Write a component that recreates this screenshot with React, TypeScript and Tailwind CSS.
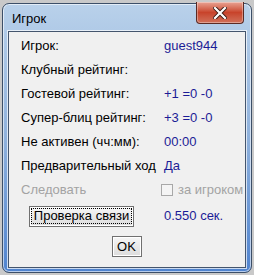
import React from "react";

const rows: { label: string; value?: string }[] = [
  { label: "Игрок:", value: "guest944" },
  { label: "Клубный рейтинг:" },
  { label: "Гостевой рейтинг:", value: "+1 =0 -0" },
  { label: "Супер-блиц рейтинг:", value: "+3 =0 -0" },
  { label: "Не активен (чч:мм):", value: "00:00" },
  { label: "Предварительный ход", value: "Да" },
];

function CloseButton() {
  return (
    <div className="flex h-[22px] w-[48px] items-center justify-center rounded-b-[4px] border border-t-0 border-[#5b2a24] bg-gradient-to-b from-[#e8a393] via-[#c8432b] to-[#d0705a] shadow-[inset_0_0_0_1px_rgba(255,255,255,0.35)]">
      <svg width="14" height="12" viewBox="0 0 14 12">
        <path d="M2 1 L12 11 M12 1 L2 11" stroke="#3a1a14" strokeWidth="4" strokeLinecap="square" />
        <path d="M2 1 L12 11 M12 1 L2 11" stroke="#ffffff" strokeWidth="2.2" strokeLinecap="square" />
      </svg>
    </div>
  );
}

export default function App() {
  return (
    <div className="h-[275px] w-[254px] bg-[#c9c9c9] pl-[2px] pt-[3px]" style={{ fontFamily: '"Liberation Sans", Arial, sans-serif' }}>
      <div className="flex h-[270px] w-[250px] flex-col rounded-[7px] border border-[#3c4f68] bg-gradient-to-b from-[#b9d1ea] via-[#8fb1dc] to-[#4f83cf] px-[5px] pb-[4px] shadow-[inset_0_0_0_1px_rgba(255,255,255,0.6)]">
        {/* Title bar */}
        <div className="flex h-[27px] items-start justify-between">
          <span className="pl-[4px] pt-[8px] text-[13px] leading-none text-black">Игрок</span>
          <div className="-mt-[2px] mr-[2px]">
            <CloseButton />
          </div>
        </div>

        {/* Client area */}
        <div className="flex flex-1 flex-col border border-[#44556d] bg-[#f0f0f0] pl-[12px] pr-[4px] pt-[2px] text-[13px] text-black shadow-[0_0_0_1px_rgba(255,255,255,0.7)]">
          {rows.map((r) => (
            <div key={r.label} className="flex h-[24px] items-center">
              <span className="w-[143px] shrink-0 whitespace-nowrap">{r.label}</span>
              {r.value && <span className="whitespace-nowrap text-[#1c1c96]">{r.value}</span>}
            </div>
          ))}

          <div className="flex h-[24px] items-center whitespace-nowrap">
            <span className="w-[140px] shrink-0 text-[#a3a3a3]">Следовать</span>
            <span className="mr-[5px] h-[12px] w-[12px] shrink-0 border border-[#a8a8a8] bg-[#f4f4f4]" />
            <span className="text-[#a3a3a3]">за игроком</span>
          </div>

          <div className="flex h-[28px] items-center">
            <div className="ml-[8px] flex h-[21px] w-[105px] items-center justify-center border border-[#707070] bg-gradient-to-b from-[#f6f6f6] to-[#dcdcdc] shadow-[inset_0_0_0_1px_#ffffff]">
              <span className="border border-dotted border-black px-[2px] leading-[14px]">Проверка связи</span>
            </div>
            <span className="ml-[30px] whitespace-nowrap text-[#1c1c96]">0.550 сек.</span>
          </div>

          <div className="flex flex-1 items-start justify-center pt-[6px] pr-[9px]">
            <div className="flex h-[21px] w-[30px] items-center justify-center border border-[#707070] bg-gradient-to-b from-[#f6f6f6] to-[#dcdcdc] shadow-[inset_0_0_0_1px_#ffffff]">
              OK
            </div>
          </div>
        </div>
      </div>
    </div>
  );
}
